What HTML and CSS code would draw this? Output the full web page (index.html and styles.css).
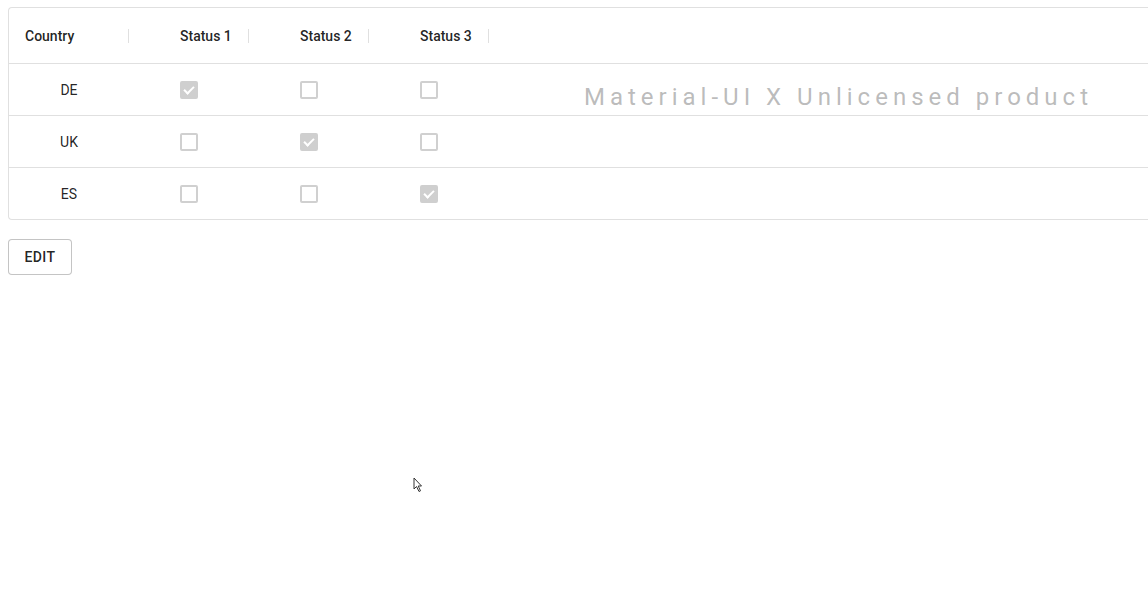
FILE: index.html
```html
<!DOCTYPE html>
<html lang="en">
<head>
    <meta charset="UTF-8">
    <title>Data Grid</title>
    <link rel="stylesheet" href="styles.css">
</head>
<body>
    <div class="grid">
        <div class="watermark">Material-UI X Unlicensed product</div>
        <div class="row header">
            <div class="cell country">Country<span class="sep"></span></div>
            <div class="cell status">Status 1<span class="sep"></span></div>
            <div class="cell status">Status 2<span class="sep"></span></div>
            <div class="cell status">Status 3<span class="sep"></span></div>
        </div>
        <div class="row">
            <div class="cell code">DE</div>
            <div class="cell box"><span class="check on"></span></div>
            <div class="cell box"><span class="check"></span></div>
            <div class="cell box"><span class="check"></span></div>
        </div>
        <div class="row">
            <div class="cell code">UK</div>
            <div class="cell box"><span class="check"></span></div>
            <div class="cell box"><span class="check on"></span></div>
            <div class="cell box"><span class="check"></span></div>
        </div>
        <div class="row last">
            <div class="cell code">ES</div>
            <div class="cell box"><span class="check"></span></div>
            <div class="cell box"><span class="check"></span></div>
            <div class="cell box"><span class="check on"></span></div>
        </div>
    </div>
    <button class="edit">Edit</button>
    <svg class="pointer" width="12" height="16" viewBox="0 0 12 16">
        <path d="M1 1 L1 12 L3.5 9.5 L6 14.5 L7.5 13.8 L5.2 9 L8.5 9 Z" fill="#fff" stroke="#333" stroke-width="1"/>
    </svg>
</body>
</html>
```

FILE: styles.css
```css
body {
    font-family: Roboto, "Noto Sans", Arial, sans-serif;
    color: rgba(0, 0, 0, 0.87);
    margin: 7px 0 0 8px;
    overflow: hidden;
    background: #fff;
}

.grid {
    position: relative;
    width: 1143px;
    border: 1px solid #e0e0e0;
    border-right: none;
    border-radius: 4px 0 0 4px;
    font-size: 14px;
}

.row {
    display: flex;
    height: 51px;
    border-bottom: 1px solid #e0e0e0;
}

.row.last {
    border-bottom: none;
}

.row.header {
    height: 55px;
}

.cell {
    width: 120px;
    display: flex;
    align-items: center;
    position: relative;
}

.header .cell {
    font-weight: 500;
}

.header .country {
    padding-left: 16px;
    width: 104px;
}

.header .status {
    padding-left: 51px;
    width: 69px;
}

.sep {
    position: absolute;
    right: 0;
    top: 21px;
    height: 14px;
    width: 1px;
    background: #e0e0e0;
}

.code {
    justify-content: center;
}

.box {
    justify-content: center;
}

.check {
    width: 14px;
    height: 14px;
    border: 2px solid #d0d0d0;
    border-radius: 2px;
    position: relative;
}

.check.on {
    background: #cfcfcf;
    border-color: #cfcfcf;
}

.check.on::after {
    content: "";
    position: absolute;
    left: 4px;
    top: 1px;
    width: 4px;
    height: 8px;
    border-right: 2px solid #fff;
    border-bottom: 2px solid #fff;
    transform: rotate(45deg);
}

.watermark {
    position: absolute;
    left: 575px;
    top: 75px;
    font-size: 24px;
    letter-spacing: 5px;
    color: rgba(130, 130, 130, 0.55);
    white-space: nowrap;
    pointer-events: none;
}

.edit {
    margin-top: 19px;
    height: 36px;
    width: 64px;
    background: #fff;
    border: 1px solid rgba(0, 0, 0, 0.23);
    border-radius: 4px;
    font-family: Roboto, Arial, sans-serif;
    font-size: 14px;
    font-weight: 500;
    letter-spacing: 0.4px;
    text-transform: uppercase;
    color: rgba(0, 0, 0, 0.87);
    padding: 0;
}

.pointer {
    position: absolute;
    left: 413px;
    top: 477px;
}
```
